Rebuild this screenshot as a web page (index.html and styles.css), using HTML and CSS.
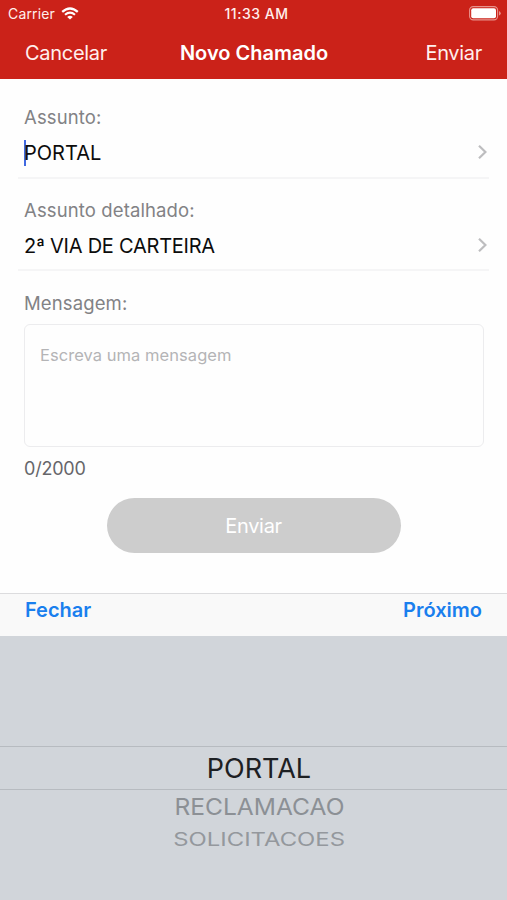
FILE: index.html
```
<!DOCTYPE html>
<html lang="pt-BR">
<head>
	<meta charset="utf-8">
	<meta name="viewport" content="width=device-width, initial-scale=1">
	<title>Novo Chamado</title>
	<link rel="stylesheet" href="styles.css">
</head>
<body>
	<header>
		<div class="status">
			<div class="carrier">
				<span>Carrier</span>
				<svg class="wifi" width="18" height="13" viewBox="0 0 18 13">
					<path d="M1.2 4.9 Q9 -2 16.8 4.9" fill="none" stroke="#fff" stroke-width="2.3"/>
					<path d="M4 7.8 Q9 3.6 14 7.8" fill="none" stroke="#fff" stroke-width="2.1"/>
					<path d="M6.2 9.9 Q9 7.7 11.8 9.9 L9 12.6 Z" fill="#fff"/>
				</svg>
			</div>
			<span class="time">11:33 AM</span>
			<svg class="battery" width="32" height="15" viewBox="0 0 32 15">
				<rect x="0.6" y="0.6" width="28" height="13.3" rx="3.6" fill="none" stroke="#e8928c" stroke-width="1.1"/>
				<rect x="2.2" y="2.2" width="24.8" height="10.1" rx="2" fill="#fff"/>
				<path d="M30 5 Q31.7 5.7 31.7 7.3 Q31.7 8.9 30 9.6 Z" fill="#e8928c"/>
			</svg>
		</div>
		<nav>
			<a class="cancel">Cancelar</a>
			<h1>Novo Chamado</h1>
			<a class="send">Enviar</a>
		</nav>
	</header>

	<main>
		<div class="field">
			<label>Assunto:</label>
			<div class="value">
				<span class="cursor"></span>
				<span class="portal">PORTAL</span>
				<svg class="chevron" width="9" height="14" viewBox="0 0 9 14"><path d="M1 0.8 L7.4 7 L1 13.2" fill="none" stroke="#bdbdbf" stroke-width="2.2"/></svg>
			</div>
		</div>
		<div class="field detail">
			<label>Assunto detalhado:</label>
			<div class="value">
				<span class="subject">2ª VIA DE CARTEIRA</span>
				<svg class="chevron" width="9" height="14" viewBox="0 0 9 14"><path d="M1 0.8 L7.4 7 L1 13.2" fill="none" stroke="#bdbdbf" stroke-width="2.2"/></svg>
			</div>
		</div>
		<div class="message">
			<label>Mensagem:</label>
			<div class="box">Escreva uma mensagem</div>
			<div class="counter">0/2000</div>
		</div>
		<button type="button">Enviar</button>
	</main>

	<div class="toolbar">
		<a class="close">Fechar</a>
		<a class="next">Próximo</a>
	</div>
	<ul class="picker">
		<li class="selected"><span>PORTAL</span></li>
		<li class="second"><span>RECLAMACAO</span></li>
		<li class="third"><span>SOLICITACOES</span></li>
	</ul>
</body>
</html>
```
FILE: styles.css
```
* {
	box-sizing: border-box;
}

body {
	margin: 0;
	height: 900px;
	display: flex;
	flex-direction: column;
	overflow: hidden;
	background: #fefefe;
	font-family: Inter, "Liberation Sans", sans-serif;
	color: #0c0c0c;
}

/* Status bar and navigation */
header {
	height: 79px;
	background: #cb2219;
	color: #ffefed;
}

.status {
	display: grid;
	grid-template-columns: 1fr auto 1fr;
	align-items: center;
	height: 27px;
	padding: 0 6px 0 8px;
	font-size: 14px;
}

.carrier {
	display: flex;
	align-items: center;
	gap: 6px;
	letter-spacing: 0.15px;
}

.time {
	margin-left: 4px;
	font-weight: 500;
	letter-spacing: 0.5px;
}

.battery {
	justify-self: end;
}

nav {
	display: grid;
	grid-template-columns: 1fr auto 1fr;
	align-items: center;
	height: 51px;
	padding: 0 25px;
	font-size: 20px;
	letter-spacing: -0.3px;
}

h1 {
	margin: 0 0 0 1px;
	font-size: 20px;
	font-weight: 600;
	letter-spacing: 0;
	color: #fff;
}

.send {
	justify-self: end;
}

/* Form */
main {
	display: flex;
	flex-direction: column;
	height: 514px;
	padding: 22px 18px 0;
}

label {
	display: block;
	height: 32px;
	line-height: 32px;
	font-size: 18.5px;
	letter-spacing: 0.12px;
	color: #828285;
}

.field {
	height: 78px;
	padding: 0 2px 0 6px;
	border-bottom: 2px solid #f5f5f6;
}

.detail {
	height: 92px;
	padding-top: 15px;
}

.value {
	display: flex;
	align-items: center;
	height: 40px;
	font-size: 20px;
}

.subject {
	letter-spacing: -0.25px;
}

.cursor {
	width: 2px;
	height: 26px;
	margin-right: -2px;
	background: #4169e1;
}

.chevron {
	margin: -2px 0 0 auto;
}

.message {
	padding: 16px 5px 0 6px;
}

.box {
	height: 123px;
	padding: 14px 15px;
	border: 1px solid #ececee;
	border-radius: 6px;
	line-height: 32px;
	font-size: 16.5px;
	letter-spacing: 0.05px;
	color: #b4b4b6;
}

.message label {
	height: 37px;
}

.counter {
	height: 41px;
	line-height: 43px;
	font-size: 18px;
	letter-spacing: -0.2px;
	color: #66666a;
}

button {
	align-self: center;
	width: 294px;
	height: 55px;
	margin-top: 10px;
	padding: 0;
	border: 0;
	border-radius: 28px;
	background: #cdcdcd;
	color: #fff;
	font-family: inherit;
	font-size: 20px;
	letter-spacing: -0.3px;
}

/* Picker */
.toolbar {
	display: flex;
	justify-content: space-between;
	height: 43px;
	padding: 0 25px;
	border-top: 1px solid #dcdcde;
	background: #f9f9f9;
	line-height: 32px;
	font-size: 20px;
	font-weight: 600;
	color: #1a7fee;
}

.picker {
	flex: 1;
	margin: 0;
	padding: 110px 0 0;
	background: #d1d5da;
	list-style: none;
	text-align: center;
	font-size: 27px;
}

.picker li {
	display: flex;
	align-items: center;
	justify-content: center;
}

.selected {
	height: 44px;
	border-top: 1px solid #b7bbc0;
	border-bottom: 1px solid #b7bbc0;
	color: #1d2023;
	padding-left: 11px;
}

.second {
	height: 33px;
	padding-left: 11px;
	color: #8c9095;
}

.second span {
	transform: scale(0.91, 0.86);
}

.third {
	height: 33px;
	padding-left: 11px;
	color: #94989d;
}

.third span {
	transform: scale(0.885, 0.68);
}
```
